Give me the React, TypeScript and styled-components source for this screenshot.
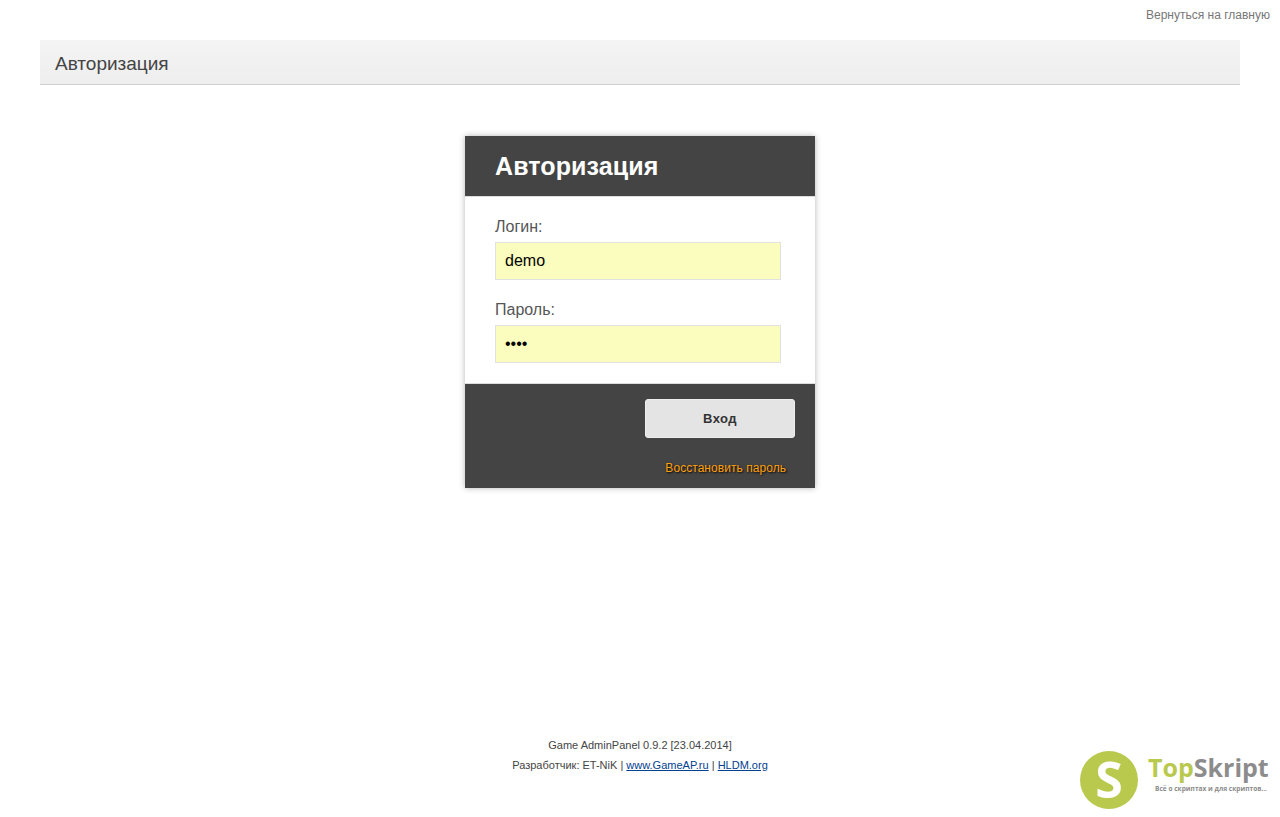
import React from 'react';
import styled, { createGlobalStyle } from 'styled-components';

const GlobalStyle = createGlobalStyle`
  html, body {
    margin: 0;
    padding: 0;
    background: #fff;
    font-family: "Liberation Sans", Arial, sans-serif;
  }
`;

const Page = styled.div`
  position: relative;
  height: 817px;
  overflow: hidden;
  display: flex;
  flex-direction: column;
`;

const TopBar = styled.div`
  height: 40px;
  padding: 8px 10px 0 0;
  box-sizing: border-box;
  text-align: right;
  font-size: 12px;
  line-height: 14px;

  > a {
    color: #777;
    text-decoration: none;
  }
`;

const PageTitle = styled.h1`
  margin: 0 40px;
  height: 45px;
  box-sizing: border-box;
  padding-left: 15px;
  background: linear-gradient(#f4f4f4, #eeeeee);
  border-bottom: 1px solid #cfcfcf;
  font-size: 19px;
  font-weight: normal;
  line-height: 47px;
  color: #444;
`;

const Main = styled.main`
  flex: 1;
  display: flex;
  justify-content: center;
  align-items: flex-start;
  padding-top: 51px;
`;

const Card = styled.form`
  width: 350px;
  background: #fff;
  box-shadow: 0 0 6px rgba(0, 0, 0, 0.3);
`;

const CardHead = styled.h2`
  margin: 0;
  height: 61px;
  box-sizing: border-box;
  padding-left: 30px;
  background: #444;
  border-bottom: 1px solid #ddd;
  color: #fff;
  font-size: 25px;
  font-weight: bold;
  letter-spacing: 0.1px;
  line-height: 61px;
`;

const CardBody = styled.div`
  height: 187px;
  box-sizing: border-box;
  padding: 20px 34px 0 30px;
  border-bottom: 1px solid #ddd;
`;

const Field = styled.label`
  display: block;
  margin-bottom: 20px;
  font-size: 16px;
  line-height: 20px;
  color: #555;

  > span {
    display: block;
    margin-bottom: 5px;
  }
`;

const Input = styled.input`
  display: block;
  width: 100%;
  height: 38px;
  box-sizing: border-box;
  padding: 0 9px;
  background: #fafdbd;
  border: 1px solid #e2e2e2;
  outline: none;
  color: #000;
  font-family: "Liberation Sans", Arial, sans-serif;
  font-size: 16px;
`;

const CardFoot = styled.div`
  height: 104px;
  box-sizing: border-box;
  padding: 15px 20px 0;
  background: #444;
  display: flex;
  flex-direction: column;
  align-items: flex-end;
`;

const SubmitButton = styled.button`
  width: 150px;
  height: 39px;
  background: #e4e4e4;
  border: 1px solid #eee;
  border-radius: 3px;
  color: #333;
  font-family: "Liberation Sans", Arial, sans-serif;
  font-size: 13px;
  font-weight: bold;
  letter-spacing: 0.5px;
`;

const RestoreLink = styled.a`
  margin: 23px 9px 0 0;
  color: #ffa00f;
  font-size: 12px;
  letter-spacing: 0.05px;
  line-height: 14px;
  text-decoration: none;
  text-shadow: 1px 1px 2px #000;
`;

const Footer = styled.footer`
  height: 82px;
  text-align: center;
  font-size: 11px;
  line-height: 20px;
  color: #444;

  > div > a {
    color: #03408f;
  }
`;

const Logo = styled.div`
  position: absolute;
  left: 1080px;
  top: 751px;
  width: 195px;
  height: 60px;
  display: flex;
`;

const LogoMark = styled.div`
  flex: none;
  width: 58px;
  height: 58px;
  border-radius: 50%;
  background: #b9c94e;
  color: #fff;
  font-family: "Open Sans", sans-serif;
  font-size: 50px;
  font-weight: bold;
  line-height: 57px;
  text-align: center;
`;

const LogoText = styled.div`
  margin-left: 10px;
`;

const LogoName = styled.div`
  font-family: "Open Sans", sans-serif;
  font-size: 25px;
  font-weight: bold;
  line-height: 32px;
  color: #8c8c8c;
  white-space: nowrap;

  > span {
    color: #b9c94e;
  }
`;

const LogoSlogan = styled.div`
  margin: 1px 0 0 7px;
  font-family: "Open Sans", sans-serif;
  font-size: 6.6px;
  font-weight: bold;
  line-height: 10px;
  color: #8c8c8c;
  white-space: nowrap;
`;

export default function App() {
  return (
    <Page>
      <GlobalStyle />
      <TopBar>
        <a href="#">Вернуться на главную</a>
      </TopBar>
      <PageTitle>Авторизация</PageTitle>
      <Main>
        <Card onSubmit={(e) => e.preventDefault()}>
          <CardHead>Авторизация</CardHead>
          <CardBody>
            <Field>
              <span>Логин:</span>
              <Input type="text" defaultValue="demo" />
            </Field>
            <Field>
              <span>Пароль:</span>
              <Input type="password" defaultValue="demo" />
            </Field>
          </CardBody>
          <CardFoot>
            <SubmitButton>Вход</SubmitButton>
            <RestoreLink href="#">Восстановить пароль</RestoreLink>
          </CardFoot>
        </Card>
      </Main>
      <Footer>
        <div>Game AdminPanel 0.9.2 [23.04.2014]</div>
        <div>
          Разработчик: ET-NiK | <a href="#">www.GameAP.ru</a> | <a href="#">HLDM.org</a>
        </div>
      </Footer>
      <Logo>
        <LogoMark>S</LogoMark>
        <LogoText>
          <LogoName>
            <span>Top</span>Skript
          </LogoName>
          <LogoSlogan>Всё о скриптах и для скриптов...</LogoSlogan>
        </LogoText>
      </Logo>
    </Page>
  );
}
